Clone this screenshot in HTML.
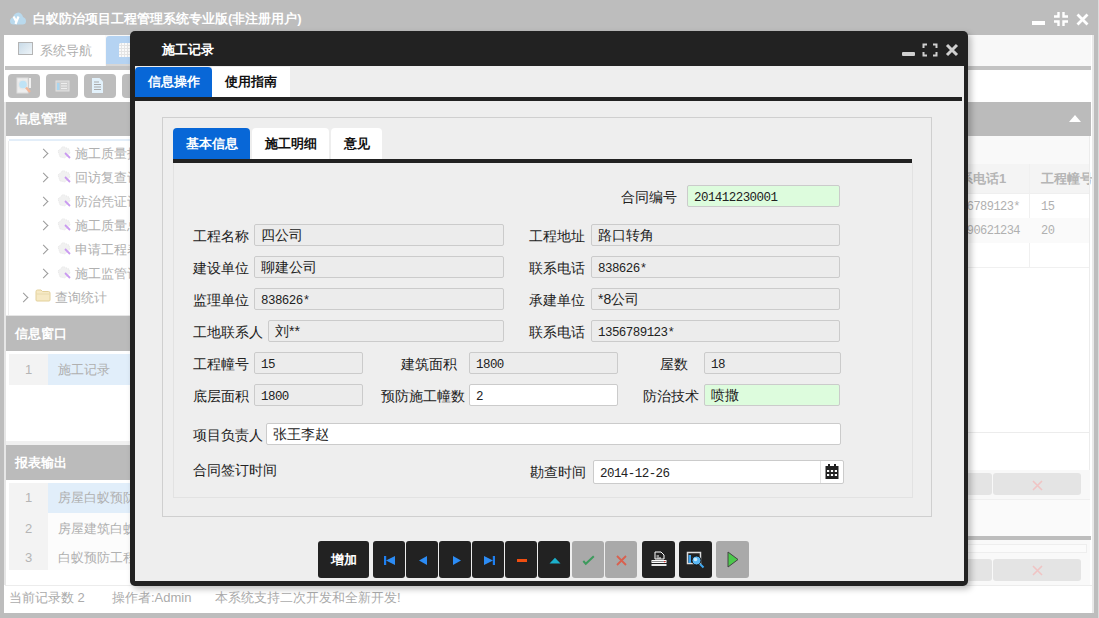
<!DOCTYPE html>
<html><head><meta charset="utf-8">
<style>
*{box-sizing:border-box;margin:0;padding:0}
html,body{width:1099px;height:618px;overflow:hidden}
body{background:#bdbdbd;font-family:"Liberation Sans",sans-serif;position:relative}
.a{position:absolute}
.bt{font-weight:bold}
/* background app */
#app{left:4px;top:35px;width:1090px;height:578px;background:#fff}
.hdr{background:#bbbbbb;color:#fff;font-weight:bold;font-size:13px;line-height:34px;padding-left:9px}
.tree{font-size:13px;color:#b0b0b0}
.tb{background:#bdbdbd;border-radius:4px}
/* dialog */
#dlg{left:130px;top:31px;width:838px;height:555px;background:#222;border-radius:5px;box-shadow:3px 3px 6px rgba(0,0,0,.25)}
#dbody{left:135px;top:66px;width:829px;height:515px;background:#eeeeee}
.tab{font-size:13px;font-weight:bold;text-align:center;border-radius:4px 4px 0 0}
.lbl{font-size:14px;color:#222;line-height:22px;padding-top:1px;white-space:nowrap}
.inp{height:22px;border:1px solid #cbcbcb;border-radius:2px;background:#ececec;font-size:14px;line-height:20px;padding-left:6px;color:#222;white-space:nowrap}
.num{font-family:"Liberation Mono",monospace;font-size:12.5px;letter-spacing:-0.55px}
.g{background:#ddfcdd}
.w{background:#fff}
.btn{background:#222;border-radius:3px;top:541px;height:37px}
.btng{background:#a9a9a9;border-radius:3px;top:541px;height:37px}
.arr{width:7px;height:7px;border-right:1.5px solid #9a9a9a;border-top:1.5px solid #9a9a9a;transform:rotate(45deg)}
.ico{width:14px;height:14px}
.fold{width:15px;height:12px;background:#f3e3b6;border:1px solid #d8c690;border-radius:1px}
</style></head><body>

<!-- main window title -->
<svg class="a" style="left:10px;top:12px" width="16" height="13" viewBox="0 0 16 13"><path d="M3.5 12.5Q0 12.5 0 9Q0 6 3 5.5Q4 1 8.5 0.5Q12 1 13 5Q16 6 16 9Q16 12.5 12.5 12.5Z" fill="#b9d9ed"/><path d="M3.5 4.5L6 9M8.5 4.5L5.5 12" stroke="#fff" stroke-width="2.2"/></svg>
<div class="a bt" style="left:33px;top:10px;font-size:13px;color:#fff;line-height:18px">白蚁防治项目工程管理系统专业版(非注册用户)</div>

<div id="app" class="a"></div>

<!-- tab strip -->
<div class="a" style="left:5px;top:35px;width:1086px;height:31px;background:#f8f8f8"></div>
<div class="a" style="left:5px;top:35px;width:100px;height:31px;background:#fff"></div>
<div class="a" style="left:18px;top:42px;width:15px;height:13px;border:1px solid #b4b4b4;background:linear-gradient(135deg,#c9dbe8,#eef4f8)"></div>
<div class="a" style="left:40px;top:41px;font-size:13px;color:#adadad;line-height:20px">系统导航</div>
<div class="a" style="left:106px;top:36px;width:40px;height:28px;background:#b5d3f2;border-top-left-radius:3px"></div><div class="a" style="left:106px;top:64px;width:40px;height:2px;background:#d6d6d6"></div>
<div class="a" style="left:119px;top:43px;width:14px;height:14px;background:repeating-linear-gradient(90deg,transparent 0 2px,#e4e4e4 2px 3px),repeating-linear-gradient(0deg,#fafafa 0 2px,#e4e4e4 2px 3px);border-top-left-radius:2px"></div>
<div class="a" style="left:5px;top:66px;width:1086px;height:4px;background:#c3c3c3"></div>
<!-- toolbar buttons -->
<div class="a tb" style="left:8px;top:74px;width:32px;height:24px"></div>
<div class="a tb" style="left:46px;top:74px;width:32px;height:24px"></div>
<div class="a tb" style="left:84px;top:74px;width:32px;height:24px"></div>
<div class="a tb" style="left:122px;top:74px;width:32px;height:24px"></div>
<div class="a" style="left:4px;top:102px;width:2px;height:483px;background:#e6e6e6"></div>
<!-- left header -->
<div class="a hdr" style="left:6px;top:102px;width:200px;height:34px">信息管理</div>
<div class="a" style="left:9px;top:139px;width:200px;height:2px;background:#e3eef9"></div>
<div class="a" style="left:8px;top:141px;width:1px;height:174px;background:#ececec"></div>


<div class="a arr" style="left:40px;top:150px"></div><div class="a ico" style="left:57px;top:146px"><svg width="14" height="14" viewBox="0 0 14 14"><path d="M1 5L6 0.5L12 3L13 7L8 12L3 11Z" fill="#f1f1f1" stroke="#e2e2e2" stroke-width="0.8" stroke-dasharray="1 1"/><path d="M8 7L13 12" stroke="#c99af0" stroke-width="1.8"/></svg></div><div class="a tree" style="left:75px;top:144px;line-height:20px">施工质量报告</div>
<div class="a arr" style="left:40px;top:174px"></div><div class="a ico" style="left:57px;top:170px"><svg width="14" height="14" viewBox="0 0 14 14"><path d="M1 5L6 0.5L12 3L13 7L8 12L3 11Z" fill="#f1f1f1" stroke="#e2e2e2" stroke-width="0.8" stroke-dasharray="1 1"/><path d="M8 7L13 12" stroke="#c99af0" stroke-width="1.8"/></svg></div><div class="a tree" style="left:75px;top:168px;line-height:20px">回访复查记录</div>
<div class="a arr" style="left:40px;top:198px"></div><div class="a ico" style="left:57px;top:194px"><svg width="14" height="14" viewBox="0 0 14 14"><path d="M1 5L6 0.5L12 3L13 7L8 12L3 11Z" fill="#f1f1f1" stroke="#e2e2e2" stroke-width="0.8" stroke-dasharray="1 1"/><path d="M8 7L13 12" stroke="#c99af0" stroke-width="1.8"/></svg></div><div class="a tree" style="left:75px;top:192px;line-height:20px">防治凭证记录</div>
<div class="a arr" style="left:40px;top:222px"></div><div class="a ico" style="left:57px;top:218px"><svg width="14" height="14" viewBox="0 0 14 14"><path d="M1 5L6 0.5L12 3L13 7L8 12L3 11Z" fill="#f1f1f1" stroke="#e2e2e2" stroke-width="0.8" stroke-dasharray="1 1"/><path d="M8 7L13 12" stroke="#c99af0" stroke-width="1.8"/></svg></div><div class="a tree" style="left:75px;top:216px;line-height:20px">施工质量总结</div>
<div class="a arr" style="left:40px;top:246px"></div><div class="a ico" style="left:57px;top:242px"><svg width="14" height="14" viewBox="0 0 14 14"><path d="M1 5L6 0.5L12 3L13 7L8 12L3 11Z" fill="#f1f1f1" stroke="#e2e2e2" stroke-width="0.8" stroke-dasharray="1 1"/><path d="M8 7L13 12" stroke="#c99af0" stroke-width="1.8"/></svg></div><div class="a tree" style="left:75px;top:240px;line-height:20px">申请工程表单</div>
<div class="a arr" style="left:40px;top:270px"></div><div class="a ico" style="left:57px;top:266px"><svg width="14" height="14" viewBox="0 0 14 14"><path d="M1 5L6 0.5L12 3L13 7L8 12L3 11Z" fill="#f1f1f1" stroke="#e2e2e2" stroke-width="0.8" stroke-dasharray="1 1"/><path d="M8 7L13 12" stroke="#c99af0" stroke-width="1.8"/></svg></div><div class="a tree" style="left:75px;top:264px;line-height:20px">施工监管记录</div>
<div class="a arr" style="left:20px;top:294px"></div><svg class="a" style="left:35px;top:289px" width="16" height="13" viewBox="0 0 16 13"><path d="M1 2.5Q1 1 2.5 1H6L7.5 2.5H13.5Q15 2.5 15 4V11Q15 12 14 12H2Q1 12 1 11Z" fill="#f6e9c4" stroke="#e3d09a" stroke-width="1"/><path d="M1.5 5H14.5" stroke="#e6d6a8" stroke-width="0.8"/></svg><div class="a tree" style="left:55px;top:288px;line-height:20px">查询统计</div>

<div class="a" style="left:5px;top:315px;width:200px;height:1px;background:#e6e6e6"></div>
<div class="a hdr" style="left:6px;top:316px;width:200px;height:35px;line-height:36px">信息窗口</div>
<div class="a" style="left:9px;top:354px;width:39px;height:31px;background:#f3f3f3;color:#b5b5b5;font-size:13px;line-height:31px;text-align:center">1</div>
<div class="a tree" style="left:48px;top:354px;width:100px;height:31px;background:#e1eefa;line-height:31px;padding-left:10px">施工记录</div>
<div class="a" style="left:6px;top:441px;width:200px;height:4px;background:#f0f0f0"></div>
<div class="a hdr" style="left:6px;top:445px;width:200px;height:35px;line-height:35px">报表输出</div>
<div class="a" style="left:9px;top:483px;width:39px;height:30px;background:#f3f3f3;color:#b5b5b5;font-size:13px;line-height:30px;text-align:center">1</div>
<div class="a tree" style="left:48px;top:483px;width:100px;height:30px;background:#e1eefa;line-height:30px;padding-left:10px">房屋白蚁预防</div>
<div class="a" style="left:9px;top:513px;width:39px;height:31px;background:#f3f3f3;color:#b5b5b5;font-size:13px;line-height:31px;text-align:center">2</div>
<div class="a tree" style="left:48px;top:513px;width:100px;height:31px;background:#fcfcfc;line-height:31px;padding-left:10px">房屋建筑白蚁</div>
<div class="a" style="left:9px;top:544px;width:39px;height:26px;background:#f3f3f3;color:#b5b5b5;font-size:13px;line-height:28px;text-align:center">3</div>
<div class="a tree" style="left:48px;top:544px;width:100px;height:26px;background:#fcfcfc;line-height:28px;padding-left:10px">白蚁预防工程</div>
<div class="a" style="left:5px;top:585px;width:1089px;height:1px;background:#ececec"></div>
<div class="a tree" style="left:9px;top:589px;line-height:18px;font-size:13px;color:#ababab">当前记录数 2</div>
<div class="a tree" style="left:112px;top:589px;line-height:18px;font-size:13px;color:#ababab">操作者:Admin</div>
<div class="a tree" style="left:215px;top:589px;line-height:18px;font-size:13px;color:#ababab">本系统支持二次开发和全新开发!</div>


<!-- right panel -->
<div class="a" style="left:900px;top:102px;width:191px;height:34px;background:#bbbbbb"></div>
<div class="a" style="left:1069px;top:115px;width:0;height:0;border-left:6px solid transparent;border-right:6px solid transparent;border-bottom:7px solid #fff"></div>
<div class="a" style="left:900px;top:136px;width:190px;height:28px;background:#f9f9f9"></div>
<div class="a" style="left:900px;top:164px;width:190px;height:30px;background:#f4f4f4;border-bottom:1px solid #efefef"></div>
<div class="a" style="left:1029px;top:164px;width:1px;height:103px;background:#f0f0f0"></div>
<div class="a bt" style="left:960px;top:170px;font-size:13px;color:#b5b5b5;line-height:18px">系电话1</div>
<div class="a bt" style="left:1041px;top:170px;font-size:13px;color:#b5b5b5;line-height:18px;white-space:nowrap">工程幢号</div>
<div class="a" style="left:900px;top:218px;width:190px;height:25px;background:#fafafa"></div>
<div class="a" style="left:900px;top:267px;width:190px;height:1px;background:#f0f0f0"></div>
<div class="a num" style="left:940px;top:199px;width:80px;text-align:right;font-size:12px;color:#b0b0b0;line-height:16px">1356789123*</div>
<div class="a num" style="left:1041px;top:199px;font-size:12px;color:#b0b0b0;line-height:16px">15</div>
<div class="a num" style="left:940px;top:223px;width:80px;text-align:right;font-size:12px;color:#b0b0b0;line-height:16px">13290621234</div>
<div class="a num" style="left:1041px;top:223px;font-size:12px;color:#b0b0b0;line-height:16px">20</div>
<div class="a" style="left:1089px;top:136px;width:1px;height:449px;background:#ececec"></div>
<div class="a" style="left:900px;top:432px;width:190px;height:1px;background:#ececec"></div>
<div class="a" style="left:900px;top:470px;width:190px;height:30px;background:#f8f8f8;border-bottom:1px solid #efefef"></div>
<div class="a" style="left:900px;top:473px;width:92px;height:22px;background:#e4e4e4;border-radius:3px"></div>
<div class="a" style="left:993px;top:473px;width:88px;height:22px;background:#e4e4e4;border-radius:3px"></div>
<svg class="a" style="left:1032px;top:480px" width="11" height="11" viewBox="0 0 11 11"><path d="M1 1L10 10M10 1L1 10" stroke="#f0c4c4" stroke-width="1.6"/></svg>
<div class="a" style="left:900px;top:500px;width:190px;height:36px;background:#fafafa"></div>
<div class="a" style="left:900px;top:536px;width:191px;height:4px;background:#bdbdbd"></div>
<div class="a" style="left:900px;top:540px;width:190px;height:45px;background:#f9f9f9"></div>
<div class="a" style="left:900px;top:544px;width:187px;height:9px;border:1px solid #eeeeee;background:#fbfbfb"></div>
<div class="a" style="left:900px;top:559px;width:92px;height:22px;background:#e4e4e4;border-radius:3px"></div>
<div class="a" style="left:993px;top:559px;width:88px;height:22px;background:#e4e4e4;border-radius:3px"></div>
<svg class="a" style="left:1032px;top:565px" width="11" height="11" viewBox="0 0 11 11"><path d="M1 1L10 10M10 1L1 10" stroke="#f0c4c4" stroke-width="1.6"/></svg>
<div class="a" style="left:1092px;top:35px;width:2px;height:578px;background:#e9e9e9"></div>
<div class="a" style="left:1098px;top:0;width:1px;height:618px;background:#dcdcdc"></div>
<!-- window controls -->
<div class="a" style="left:1032px;top:21px;width:13px;height:4px;background:#fff"></div>
<svg class="a" style="left:1053px;top:11px" width="16" height="16" viewBox="0 0 16 16"><path d="M5.5 1V5.5H1M10.5 1V5.5H15M5.5 15V10.5H1M10.5 15V10.5H15" fill="none" stroke="#fff" stroke-width="2.4"/></svg>
<svg class="a" style="left:1076px;top:13px" width="13" height="13" viewBox="0 0 13 13"><path d="M1.5 1.5L11.5 11.5M11.5 1.5L1.5 11.5" stroke="#fff" stroke-width="2.8"/></svg>

<!-- dialog -->
<div id="dlg" class="a"></div>
<div class="a bt" style="left:162px;top:41px;font-size:13px;color:#fff;line-height:18px">施工记录</div>
<div id="dbody" class="a"></div>


<!-- title icons -->
<div class="a" style="left:902px;top:52px;width:13px;height:4px;background:#d0d0d0;border-radius:1px"></div>
<svg class="a" style="left:922px;top:43px" width="16" height="14" viewBox="0 0 16 14"><path d="M1.5 5V1.5H5M11 1.5H14.5V5M14.5 9V12.5H11M5 12.5H1.5V9" fill="none" stroke="#d0d0d0" stroke-width="2"/></svg>
<svg class="a" style="left:945px;top:43px" width="14" height="14" viewBox="0 0 14 14"><path d="M2 2L12 12M12 2L2 12" stroke="#d0d0d0" stroke-width="3"/></svg>
<!-- dialog tabs -->
<div class="a" style="left:135px;top:66px;width:829px;height:31px;background:#eeeeee"></div>
<div class="a tab" style="left:135px;top:67px;width:77px;height:30px;background:#0867d7;color:#fff;line-height:30px">信息操作</div>
<div class="a tab" style="left:212px;top:67px;width:78px;height:30px;background:#fff;color:#111;line-height:30px;border-radius:0">使用指南</div>
<div class="a" style="left:135px;top:97px;width:827px;height:4px;background:#222"></div>
<!-- fieldset -->
<div class="a" style="left:162px;top:117px;width:770px;height:400px;border:1px solid #cfcfcf"></div>
<div class="a tab" style="left:173px;top:128px;width:77px;height:31px;background:#0867d7;color:#fff;line-height:31px">基本信息</div>
<div class="a tab" style="left:252px;top:128px;width:77px;height:31px;background:#fff;color:#111;line-height:31px">施工明细</div>
<div class="a tab" style="left:331px;top:128px;width:51px;height:31px;background:#fff;color:#111;line-height:31px">意见</div>
<div class="a" style="left:173px;top:159px;width:739px;height:4px;background:#222"></div>
<div class="a" style="left:173px;top:163px;width:740px;height:335px;border:1px solid #e2e2e2;border-top:0"></div>
<div class="a lbl" style="left:621px;top:185px">合同编号</div>
<div class="a inp g" style="left:687px;top:185px;width:153px"><span class="num">201412230001</span></div>
<div class="a lbl" style="left:193px;top:224px">工程名称</div>
<div class="a inp " style="left:254px;top:224px;width:250px">四公司</div>
<div class="a lbl" style="left:529px;top:224px">工程地址</div>
<div class="a inp " style="left:591px;top:224px;width:249px">路口转角</div>
<div class="a lbl" style="left:193px;top:256px">建设单位</div>
<div class="a inp " style="left:254px;top:256px;width:250px">聊建公司</div>
<div class="a lbl" style="left:529px;top:256px">联系电话</div>
<div class="a inp " style="left:591px;top:256px;width:249px"><span class="num">838626*</span></div>
<div class="a lbl" style="left:193px;top:288px">监理单位</div>
<div class="a inp " style="left:254px;top:288px;width:250px"><span class="num">838626*</span></div>
<div class="a lbl" style="left:529px;top:288px">承建单位</div>
<div class="a inp " style="left:591px;top:288px;width:249px">*8公司</div>
<div class="a lbl" style="left:193px;top:320px">工地联系人</div>
<div class="a inp " style="left:268px;top:320px;width:236px">刘**</div>
<div class="a lbl" style="left:529px;top:320px">联系电话</div>
<div class="a inp " style="left:591px;top:320px;width:249px"><span class="num">1356789123*</span></div>
<div class="a lbl" style="left:193px;top:352px">工程幢号</div>
<div class="a inp " style="left:254px;top:352px;width:109px"><span class="num">15</span></div>
<div class="a lbl" style="left:401px;top:352px">建筑面积</div>
<div class="a inp " style="left:469px;top:352px;width:149px"><span class="num">1800</span></div>
<div class="a lbl" style="left:660px;top:352px">屋数</div>
<div class="a inp " style="left:704px;top:352px;width:137px"><span class="num">18</span></div>
<div class="a lbl" style="left:193px;top:384px">底层面积</div>
<div class="a inp " style="left:254px;top:384px;width:109px"><span class="num">1800</span></div>
<div class="a lbl" style="left:381px;top:384px">预防施工幢数</div>
<div class="a inp w" style="left:469px;top:384px;width:149px"><span class="num">2</span></div>
<div class="a lbl" style="left:643px;top:384px">防治技术</div>
<div class="a inp g" style="left:704px;top:384px;width:136px">喷撒</div>
<div class="a lbl" style="left:193px;top:423px">项目负责人</div>
<div class="a inp w" style="left:266px;top:423px;width:575px">张王李赵</div>
<div class="a lbl" style="left:193px;top:458px">合同签订时间</div>
<div class="a lbl" style="left:530px;top:460px">勘查时间</div>
<div class="a inp w" style="left:593px;top:460px;width:251px;height:24px;line-height:22px"><span class="num">2014-12-26</span></div>
<div class="a" style="left:820px;top:461px;width:1px;height:22px;background:#e2e2e2"></div>
<svg class="a" style="left:825px;top:463px" width="14" height="16" viewBox="0 0 14 16"><rect x="0.5" y="3" width="13" height="13" fill="#222"/><rect x="3" y="1" width="2" height="3" fill="#222"/><rect x="9" y="1" width="2" height="3" fill="#222"/><g fill="#fff"><rect x="2" y="7" width="2.2" height="2"/><rect x="5.9" y="7" width="2.2" height="2"/><rect x="9.8" y="7" width="2.2" height="2"/><rect x="2" y="11" width="2.2" height="2"/><rect x="5.9" y="11" width="2.2" height="2"/><rect x="9.8" y="11" width="2.2" height="2"/></g></svg>
<div class="a btn bt" style="left:318px;width:51px;color:#fff;font-size:13px;line-height:37px;text-align:center">增加</div>
<div class="a btn" style="left:373px;width:32px"></div>
<div class="a btn" style="left:406px;width:32px"></div>
<div class="a btn" style="left:439px;width:32px"></div>
<div class="a btn" style="left:472px;width:32px"></div>
<div class="a btn" style="left:505px;width:32px"></div>
<div class="a btn" style="left:538px;width:32px"></div>
<div class="a btng" style="left:572px;width:32px"></div>
<div class="a btng" style="left:605px;width:32px"></div>
<div class="a btn" style="left:642px;width:33px"></div>
<div class="a btn" style="left:679px;width:33px"></div>
<div class="a btng" style="left:716px;width:33px"></div>

<!-- button icons -->
<svg class="a" style="left:383px;top:555px" width="13" height="11" viewBox="0 0 13 11"><rect x="1" y="1" width="2.2" height="9" fill="#1e7ff0"/><path d="M3 5.5L12 1V10Z" fill="#2c8cf5"/></svg>
<svg class="a" style="left:418px;top:555px" width="10" height="11" viewBox="0 0 10 11"><path d="M1 5.5L9 1V10Z" fill="#2c8cf5"/></svg>
<svg class="a" style="left:452px;top:555px" width="10" height="11" viewBox="0 0 10 11"><path d="M9 5.5L1 1V10Z" fill="#2c8cf5"/></svg>
<svg class="a" style="left:483px;top:555px" width="13" height="11" viewBox="0 0 13 11"><rect x="9.8" y="1" width="2.2" height="9" fill="#1e7ff0"/><path d="M10 5.5L1 1V10Z" fill="#2c8cf5"/></svg>
<div class="a" style="left:517px;top:559px;width:10px;height:3px;background:#f04e10"></div>
<svg class="a" style="left:549px;top:557px" width="12" height="7" viewBox="0 0 12 7"><path d="M0.5 6.5L6 0.8L11.5 6.5Z" fill="#1cb0cc"/></svg>
<svg class="a" style="left:582px;top:555px" width="13" height="11" viewBox="0 0 13 11"><path d="M1.3 6L3.8 8.8L11.8 1.3" fill="none" stroke="#3c9a5c" stroke-width="2"/></svg>
<svg class="a" style="left:616px;top:555px" width="11" height="11" viewBox="0 0 11 11"><path d="M1 1L10 10M10 1L1 10" stroke="#d9604e" stroke-width="1.8"/></svg>
<svg class="a" style="left:650px;top:551px" width="18" height="18" viewBox="0 0 18 18"><path d="M5 1H11L14 4V8H5Z" fill="#222" stroke="#fff" stroke-width="1"/><path d="M6.5 5H9M6.5 7H11" stroke="#fff" stroke-width="1"/><rect x="1.5" y="9" width="15" height="3" fill="#fff"/><path d="M2.5 10.5H15.5" stroke="#222" stroke-width="1" stroke-dasharray="1 1"/><rect x="1.5" y="13" width="15" height="2" fill="#e8e8e8"/><rect x="14" y="10" width="1.2" height="1.2" fill="#e22"/></svg>
<svg class="a" style="left:686px;top:551px" width="20" height="18" viewBox="0 0 20 18"><rect x="1.5" y="1.5" width="13" height="11" fill="#222" stroke="#dcdcdc" stroke-width="1.5"/><rect x="2.5" y="4" width="2.5" height="8" fill="#3ba2f0"/><circle cx="10.5" cy="9.5" r="4.5" fill="#5ab8f5" stroke="#111" stroke-width="1"/><circle cx="9.5" cy="8.5" r="1.8" fill="#c8ecff"/><path d="M14 13L17.5 16.5" stroke="#40a8f0" stroke-width="2"/></svg>
<svg class="a" style="left:727px;top:551px" width="12" height="17" viewBox="0 0 12 17"><path d="M1 1L11 8.5L1 16Z" fill="#4cc94c" stroke="#444" stroke-width="1"/></svg>
<!-- toolbar icons -->
<svg class="a" style="left:15px;top:77px" width="18" height="18" viewBox="0 0 18 18"><rect x="2" y="1" width="11" height="15" fill="#eee" stroke="#ddd"/><circle cx="8" cy="7.5" r="4.5" fill="#bfe3f6" stroke="#e8e8e8" stroke-width="1.3"/><path d="M11 10.5L15 15" stroke="#f2b79a" stroke-width="2.4"/><rect x="14" y="1" width="2" height="10" fill="#f0f0f0"/></svg>
<svg class="a" style="left:54px;top:78px" width="17" height="16" viewBox="0 0 17 16"><rect x="2" y="3" width="13" height="10" fill="#cfcfcf" stroke="#e2e2e2"/><rect x="3" y="5" width="2.5" height="7" fill="#a9d6f0"/><path d="M7 5.5H13M7 8H13M7 10.5H13" stroke="#eee" stroke-width="1"/></svg>
<svg class="a" style="left:89px;top:77px" width="16" height="18" viewBox="0 0 16 18"><path d="M3 1H10.5L14 4.5V16H3Z" fill="#e2f1fb"/><path d="M5 5H10M5 7.5H12M5 10H12M5 12.5H12" stroke="#a9a9a9" stroke-width="1"/></svg>
</body></html>
